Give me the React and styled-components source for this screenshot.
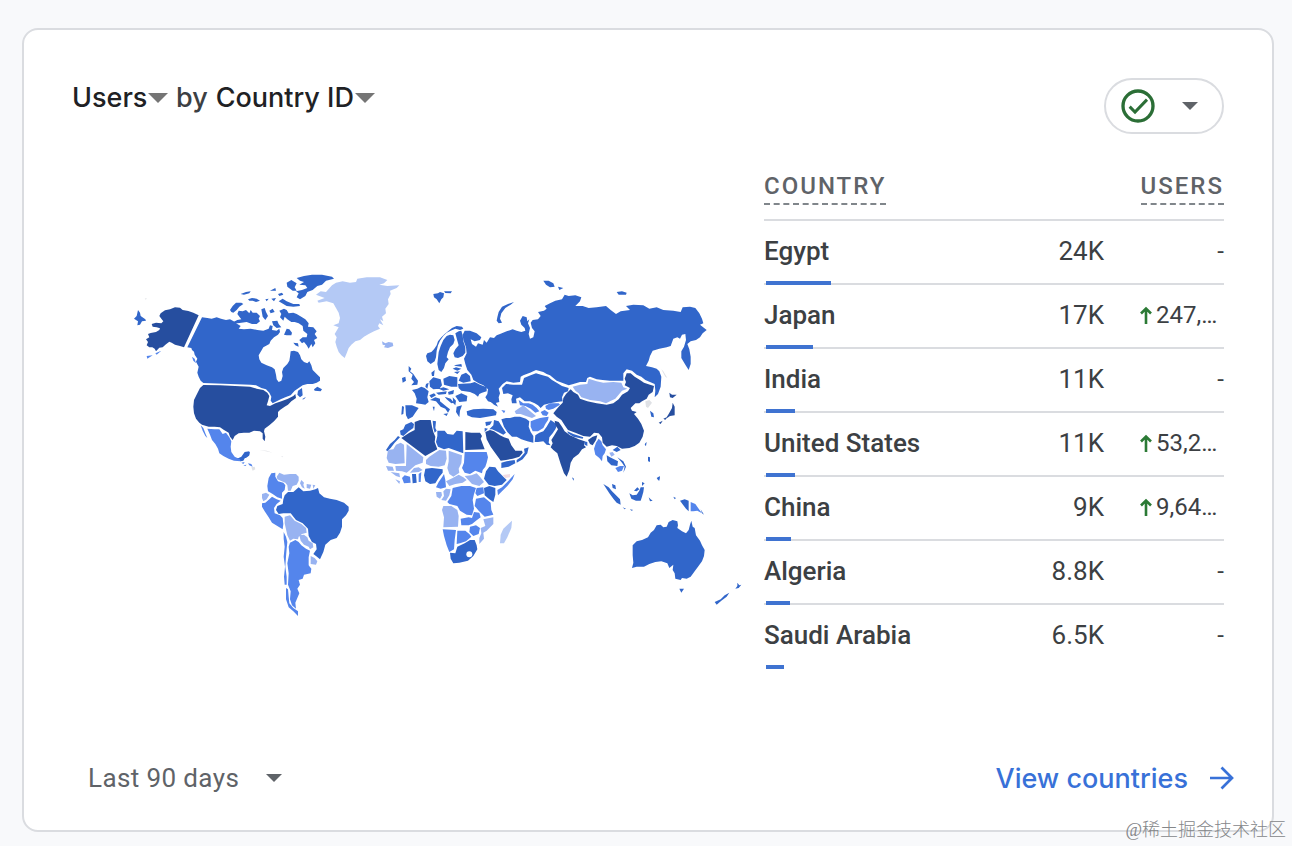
import React from 'react';
import styled, { createGlobalStyle } from 'styled-components';

const tones = {
  top: '#264e9f',
  high: '#3166ca',
  mid: '#5485ec',
  low: '#98b3f1',
  least: '#b4c9f5',
  none: '#dfe1e5',
};

const regions = [
  {
    name: 'north-america',
    origin: [0, 0],
    shapes: {
      top: [
        'M122,160 135,151 150,148 165,142 180,143 188,150 205,153 220,158 236,166 192,262 180,258 165,254 155,248 148,245 138,253 128,262 118,263 108,274 104,266 97,262 88,262 80,256 84,246 78,238 88,232 84,222 92,219 108,216 118,210 120,205 110,202 98,200 95,192 108,188 124,190 130,184 124,176 118,168Z',
        'M250,375 300,376 390,380 410,386 430,390 442,398 448,408 444,424 440,436 450,438 466,430 484,424 504,416 520,408 526,402 528,414 514,424 504,434 494,440 480,450 474,456 474,470 462,484 448,496 434,506 432,514 436,530 434,544 428,536 428,520 420,514 402,512 388,518 372,518 356,520 344,528 338,540 330,530 326,518 312,510 300,502 284,500 266,500 246,494 238,488 228,476 222,460 220,440 222,420 232,400 240,384Z',
      ],
      high: [
        'M54,150 60,158 62,168 76,178 78,182 66,184 60,194 52,196 54,184 42,176 50,168Z',
        'M246,172 262,174 275,176 290,172 303,176 318,180 330,178 345,186 352,192 362,198 356,206 372,208 392,206 412,210 430,212 446,206 450,196 458,198 456,210 470,212 478,206 480,216 474,224 462,232 452,242 448,252 430,262 424,272 416,286 418,298 424,308 440,316 456,322 464,328 468,344 470,358 476,366 484,362 488,348 486,336 490,324 502,312 508,302 510,290 512,274 522,272 534,276 540,286 544,298 552,306 562,310 568,304 574,316 578,330 590,342 600,352 600,362 590,368 578,372 562,372 548,376 536,384 524,392 512,406 496,412 482,418 470,424 458,430 452,422 454,410 448,398 438,388 424,384 408,376 392,374 250,369 242,362 236,350 232,338 236,320 228,305 232,296 224,284 222,275 216,270 214,264 202,262Z',
        'M330,150 338,138 348,128 364,128 370,132 358,140 350,150 340,158 334,156Z',
        'M356,152 368,154 378,150 388,160 392,150 398,158 410,158 420,168 416,176 420,184 410,192 396,192 380,186 364,188 352,190 340,186 352,180 364,178 358,170 352,162Z',
        'M362,102 378,96 392,94 388,100 372,104Z',
        'M384,118 396,114 410,116 420,122 408,126 398,122 388,122Z',
        'M424,148 434,144 438,156 444,168 436,180 428,170Z',
        'M436,118 446,116 440,124Z M448,152 458,146 464,156 452,160Z M454,116 468,114 462,124Z M450,92 466,84 468,92Z M474,102 486,98 490,104 478,108Z',
        'M476,124 488,116 500,124 520,132 538,132 540,138 520,140 500,138 490,132Z',
        'M500,68 514,60 530,70 524,82 530,92 518,92 502,80Z',
        'M530,54 552,48 576,44 606,44 636,50 642,56 618,62 606,74 592,78 578,90 562,96 556,108 540,118 530,112 536,100 528,94 546,90 562,84 556,76 538,74 552,66 540,62Z',
        'M478,152 492,146 500,150 506,160 520,158 530,162 540,168 556,178 566,190 564,200 580,202 590,214 584,222 592,234 582,240 586,250 578,262 574,252 566,266 560,256 552,246 546,250 538,240 548,232 560,232 562,222 550,212 548,198 536,190 524,186 514,186 502,178 494,170 490,182 480,172 484,162Z',
        'M456,184 472,182 476,192 484,202 470,204 460,196Z',
        'M492,224 500,206 508,208 516,218 514,226 500,226Z M520,248 534,250 536,260 526,256Z',
        'M582,388 592,380 606,388 602,394 584,392Z',
        'M534,392 546,384 548,406 540,412 532,404Z M546,418 558,410 552,418Z',
        'M334,594 356,594 364,590 374,576 388,574 386,588 376,592 370,602 362,604 356,602Z',
      ],
      mid: [
        'M262,506 284,508 298,508 308,522 318,518 328,532 334,544 332,560 334,576 344,590 360,598 362,604 342,602 326,596 310,588 298,580 294,566 286,552 276,540 270,524Z',
        'M242,496 250,504 256,520 262,534 256,528 248,512Z',
        'M80,288 98,286 82,296Z M106,280 124,272 110,284Z M216,290 224,296 228,310 220,302Z',
        'M364,608 374,606 370,612Z M384,610 394,612 398,620 388,616Z M370,616 380,614 376,618Z',
      ],
      none: [
        'M394,622 404,620 406,628 398,632Z M418,570 440,572 458,578 438,574Z M484,588 490,590 486,592Z M74,116 80,114 78,119Z',
      ],
    },
  },
  {
    name: 'north-atlantic',
    origin: [540, 0],
    shapes: {
      least: [
        'M48,104 62,94 78,96 96,76 108,68 128,64 150,68 168,66 172,56 200,52 240,52 262,60 252,70 238,74 262,78 298,76 290,84 270,92 272,102 264,118 266,132 256,146 258,160 246,170 250,184 240,178 250,196 238,190 234,198 240,206 222,214 206,222 192,230 180,240 166,244 154,254 146,264 140,280 134,294 124,286 116,276 110,260 106,246 110,232 104,222 116,202 100,196 116,190 120,174 116,158 108,144 100,130 80,124 56,128 52,122 74,114Z',
      ],
      low: ['M246,244 256,250 266,246 278,248 280,258 264,264 252,262 256,256 248,254Z'],
      high: [
        'M400,102 414,100 420,96 432,100 430,112 424,118 418,130 410,118 402,112Z M432,94 456,94 452,100 436,99Z',
        'M642,126 624,132 606,140 596,156 592,172 590,182 596,190 606,188 600,176 604,160 616,144 632,134Z',
        'M378,288 382,280 394,276 402,268 410,256 414,244 424,232 434,222 446,212 456,204 470,198 486,200 490,206 480,210 466,206 452,212 440,218 430,228 420,242 414,256 410,272 408,292 404,304 392,312 382,304Z',
        'M416,330 412,312 414,294 416,276 422,258 430,240 440,228 450,224 460,226 464,240 460,252 450,262 444,276 440,292 446,298 436,310 432,324 424,336Z',
        'M466,220 476,214 484,212 488,226 490,244 496,262 496,278 488,288 474,294 464,292 460,280 466,268 476,256 472,242Z',
      ],
    },
  },
  {
    name: 'europe',
    origin: [780, 180],
    shapes: {
      high: [
        'M86,138 94,146 90,154 100,162 108,174 114,182 112,194 94,196 102,186 94,176 98,164 86,154Z',
        'M66,174 76,170 78,182 68,188Z',
        'M96,210 112,206 124,200 134,204 146,214 142,232 146,246 136,254 124,252 108,250 110,236 104,220Z',
        'M76,256 96,256 116,264 106,278 98,290 84,298 78,286Z M66,258 72,260 70,282 64,284Z',
        'M148,184 160,172 182,178 186,196 178,206 160,208 150,200Z M154,158 164,150 162,168 156,168Z M138,192 146,188 142,206 136,200Z',
        'M190,176 208,168 232,172 232,200 214,200 192,194Z',
        'M176,206 190,202 208,208 190,212Z M168,218 200,214 198,222 176,224Z M148,226 162,220 168,226 154,234Z',
        'M150,240 166,232 180,236 180,244 200,260 210,268 204,278 196,266 182,260 168,244Z M158,260 164,260 162,274Z M190,282 204,280 200,288Z',
        'M204,216 222,210 220,222 206,224Z M226,228 244,220 262,228 260,244 238,246Z',
        'M236,182 244,164 258,158 270,168 272,184 250,188Z',
        'M218,146 228,142 244,146 232,152Z M222,136 244,132 246,140 228,138Z M222,156 240,154 232,162Z',
        'M234,192 272,190 284,186 300,194 320,202 320,214 306,218 298,222 294,230 284,222 270,216 244,212 236,204Z',
        'M194,230 212,236 222,248 214,250 200,238Z M218,232 228,242 226,256 220,250Z M230,260 246,256 240,272 238,292 228,276Z',
        'M322,236 346,246 354,260 342,254Z',
        'M260,274 280,268 310,266 340,268 350,276 348,286 322,290 300,294 276,292 262,286Z',
      ],
    },
  },
  {
    name: 'asia',
    origin: [1140, 0],
    shapes: {
      high: [
        'M-106,212 -90,212 -70,220 -56,232 -60,240 -76,244 -88,238 -84,252 -72,260 -66,250 -52,254 -48,240 -40,248 -30,232 -18,234 -10,226 0,222 20,214 38,208 50,212 64,216 76,212 74,204 64,194 60,182 68,168 80,172 82,184 88,178 84,190 90,204 86,222 90,236 100,232 104,214 96,204 92,188 98,180 114,178 122,168 114,156 132,152 140,146 134,138 150,130 166,122 186,118 194,104 206,108 226,106 244,112 240,124 226,138 248,138 266,144 290,142 318,138 332,150 348,162 362,154 390,150 378,138 400,134 430,136 448,146 470,142 490,150 520,152 542,156 548,142 570,140 586,144 598,160 606,176 610,190 600,194 620,210 608,220 600,232 588,240 572,244 562,252 568,268 572,290 572,312 566,330 556,314 544,294 544,274 552,260 558,240 556,222 546,224 540,236 532,232 520,236 512,258 500,262 478,266 458,272 450,288 446,302 438,318 456,322 470,326 478,334 484,350 482,380 474,402 464,412 466,392 464,372 450,366 436,360 424,350 410,344 396,332 380,328 370,340 370,362 352,362 330,362 308,360 290,358 270,350 262,354 258,366 240,366 220,372 206,376 190,370 170,362 150,346 140,342 130,336 108,330 90,338 70,346 62,350 60,366 40,368 20,364 8,372 -4,386 0,400 -4,412 -2,426 -16,430 -36,424 -44,412 -38,402 -36,388 -50,376 -64,370 -80,360 -86,344 -98,330 -104,312 -108,296 -100,280 -102,262 -110,240 -112,224Z',
        'M130,62 146,62 160,70 164,80 150,82 138,74Z M174,80 190,84 178,90Z M350,96 366,94 380,98 378,104 356,104Z',
        'M6,384 18,372 40,374 66,374 72,354 92,346 108,340 128,346 144,350 156,360 170,368 186,378 206,384 204,394 192,398 186,412 188,424 170,426 150,430 132,434 122,444 114,436 104,430 90,424 74,424 60,412 48,416 50,430 36,430 34,418 38,406 24,400 10,402Z',
        'M4,478 18,474 30,474 44,470 60,470 78,476 88,484 86,500 92,516 100,528 100,548 82,544 64,538 50,530 36,530 22,516 12,500Z',
        'M106,526 118,518 130,514 140,500 146,490 152,480 164,488 172,494 166,508 158,520 148,532 146,548 152,556 140,554 130,544 114,546 104,546Z',
        'M202,514 220,522 250,532 248,536 220,530 204,520Z M252,544 262,546 262,558 254,554Z',
        'M450,452 460,460 462,472 454,470Z M436,550 440,546 438,558Z',
        'M320,586 330,592 342,598 354,604 352,618 334,616 322,604Z M338,570 352,560 362,570 350,576Z M352,592 370,604 378,620 370,638 374,620 366,608Z',
        'M444,590 450,592 450,606 444,602Z M470,654 480,648 476,662Z M216,652 222,656 220,662Z',
      ],
      top: [
        'M164,482 176,486 186,500 194,514 210,526 236,538 254,544 252,556 258,562 246,568 236,582 220,594 212,608 208,630 200,650 192,640 182,612 172,580 160,570 152,562 158,550 154,540 164,524 174,508 166,494Z',
        'M264,540 278,530 292,526 288,540 278,556 270,552Z',
        'M166,452 178,438 188,428 190,414 198,402 212,388 220,396 234,404 240,416 262,424 290,430 320,434 340,430 356,418 366,404 384,394 390,384 374,376 378,366 374,356 380,340 392,340 404,350 420,360 432,368 450,374 462,378 458,396 446,404 440,416 426,424 418,430 406,430 392,444 396,452 410,456 402,462 414,476 424,492 432,512 428,530 418,548 404,558 388,564 366,566 350,558 336,556 320,560 308,548 306,532 296,520 282,518 270,530 250,528 226,518 204,510 194,496 184,480 170,470 160,460Z',
        'M508,398 516,404 530,404 518,414 510,412Z',
        'M518,428 524,440 524,466 510,468 496,478 506,462 516,444Z M476,488 488,482 482,492Z M490,476 500,472 496,480Z',
      ],
      mid: [
        'M56,420 70,430 86,430 98,434 110,444 118,454 106,458 92,446 76,438 60,436Z',
        'M136,438 150,430 176,430 180,434 160,446 146,450 138,446Z',
        'M92,484 108,478 120,474 134,472 146,470 144,480 136,492 130,504 114,514 98,514 92,500Z',
        'M288,548 296,536 304,544 308,556 318,568 314,580 308,588 306,604 298,594 286,584 282,566Z',
        'M346,624 360,618 372,618 366,632 354,636Z',
        'M4,450 16,452 12,460Z M122,456 134,450 146,458 140,468 128,466Z',
      ],
      low: [
        'M218,380 240,374 262,372 266,356 290,364 310,368 340,366 364,368 370,382 382,386 366,392 356,404 346,416 330,424 318,430 300,424 270,420 244,412 236,400 226,392Z',
        'M44,454 58,444 70,436 82,446 96,458 108,468 96,474 78,468 62,462 48,462Z',
        'M328,578 338,576 344,584 334,590Z',
      ],
      none: ['M436,424 448,420 456,428 444,444 438,440Z M484,328 490,334 502,354 496,350Z'],
    },
  },
  {
    name: 'oceania',
    origin: [1410, 510],
    shapes: {
      high: [
        'M40,162 56,172 66,184 78,196 90,208 92,224 80,218 70,206 58,190Z M66,162 76,166 78,178 68,174Z',
        'M118,190 128,196 140,194 148,182 152,172 162,172 160,186 156,200 152,212 138,212 124,206Z M132,182 142,172 148,178 140,184Z M156,156 164,160 156,168Z',
        'M176,202 182,208 188,212 180,214Z M98,232 108,236 104,238Z M120,238 130,240 124,242Z',
        'M176,80 180,92 176,96Z M202,146 210,140 208,152Z M250,200 258,204 254,208Z M164,44 168,38 168,48Z',
        'M270,212 284,208 296,212 296,244 288,236 280,226Z M332,238 342,254 336,250Z',
        'M128,346 140,334 156,330 174,322 182,308 192,300 200,286 212,284 220,292 230,290 236,276 248,270 262,274 264,286 262,294 276,304 288,310 296,300 300,284 304,272 308,290 314,294 318,316 330,332 336,346 344,360 342,378 336,394 324,410 314,424 302,440 290,446 276,444 272,450 256,446 254,430 248,420 250,404 238,414 232,400 214,394 196,396 178,402 162,410 140,410 126,414 130,398 128,376Z',
        'M268,476 282,476 274,488Z M374,516 392,508 404,496 418,488 410,500 394,512 380,524Z M442,458 448,466 454,464 446,474 436,476 442,468Z',
      ],
      mid: ['M302,216 316,222 326,236 336,250 322,242 310,244 302,244Z'],
    },
  },
  {
    name: 'south-america',
    origin: [360, 570],
    shapes: {
      high: [
        'M134,136 144,126 160,126 176,112 190,124 210,122 226,118 234,114 238,130 252,142 270,146 290,150 312,158 326,170 326,182 318,196 306,208 306,230 300,248 290,264 272,270 256,284 250,306 240,328 228,318 220,312 230,298 228,282 216,276 206,258 204,236 188,220 168,210 152,190 130,190 116,192 108,180 112,168 128,162 130,148Z',
        'M10,20 20,8 30,6 28,16 18,24 10,24Z',
      ],
      mid: [
        'M86,84 94,70 106,68 106,80 114,94 130,98 136,106 134,120 126,128 126,146 112,142 98,132 84,124 82,108Z',
        'M66,160 76,158 88,148 96,140 110,148 122,152 110,162 102,174 104,190 120,196 128,204 130,222 128,238 112,228 96,218 86,202 74,184 66,170Z',
        'M150,278 166,270 176,276 184,286 198,296 210,302 206,322 206,346 214,356 212,370 192,374 188,386 176,390 180,404 172,416 178,430 172,444 166,458 168,476 156,466 150,448 152,424 144,404 146,370 142,340 148,310 146,290Z',
        'M131,246 138,260 142,276 140,296 138,320 136,350 140,380 140,404 134,404 132,380 135,350 131,320 134,290 131,266Z',
        'M138,414 144,418 146,440 148,460 160,474 174,484 174,498 160,484 146,472 138,448Z',
      ],
      low: [
        'M110,80 118,68 132,74 150,72 168,72 176,80 176,92 170,104 158,108 152,122 144,122 142,106 136,98 122,92 112,88Z',
        'M184,90 192,98 190,104 194,116 186,112 180,100Z M200,102 214,104 210,116 200,114Z M218,104 226,106 220,116Z',
        'M66,132 78,128 88,134 80,148 70,154 66,144Z',
        'M134,200 150,196 164,212 184,222 198,234 200,248 186,252 176,260 174,268 160,266 150,272 142,256 138,238 134,220Z',
        'M178,256 192,254 202,262 206,272 218,280 220,292 210,298 206,290 192,284 182,272Z',
        'M212,318 224,324 232,334 228,344 212,342Z',
      ],
    },
  },
  {
    name: 'africa',
    origin: [750, 420],
    shapes: {
      high: [
        'M124,66 132,72 130,84 116,94 100,108 92,104 90,92 100,88 106,74Z M48,150 60,132 74,120 84,108 90,112 74,128 62,144 52,154Z',
        'M188,62 198,64 196,84 200,92 194,98 190,84Z',
        'M202,92 224,92 232,102 250,104 260,92 278,94 280,160 236,144 222,148 204,140 198,126 202,108Z',
        'M348,214 358,200 376,202 384,214 400,230 410,240 396,254 374,258 356,254 342,236Z',
        'M342,264 358,258 376,264 376,284 370,306 358,298 344,286Z',
        'M166,206 186,204 218,208 218,218 208,230 196,250 180,252 166,244 162,226Z',
        'M126,222 138,222 140,248 128,250Z',
        'M240,458 256,460 262,440 284,430 300,420 314,420 320,436 322,448 310,468 294,482 268,488 250,490 242,476Z',
        'M462,146 476,142 472,160 458,178 440,188 440,180 452,172 464,158Z M394,188 410,184 434,180 436,190 416,200 394,204Z',
        'M372,60 386,64 396,80 408,98 400,104 384,96 366,88 358,88 370,76Z M346,66 366,64 360,74 348,78Z M344,84 354,86 344,96Z',
      ],
      top: [
        'M134,66 150,60 182,60 186,80 190,96 196,110 194,126 202,148 166,168 94,114 118,98 134,90Z',
        'M286,96 304,98 330,98 336,108 332,116 344,148 286,150Z',
        'M346,96 360,90 372,94 390,106 402,112 416,116 424,136 436,152 456,152 458,158 448,170 428,176 408,180 392,182 388,176 376,160 362,140 350,118Z',
      ],
      mid: [
        'M284,156 350,156 354,172 350,188 346,200 338,210 336,220 316,212 300,222 284,218 276,204 282,188Z',
        'M434,222 428,238 412,258 396,274 384,286 382,270 396,262 414,244Z',
        'M96,234 104,226 120,230 122,248 102,250Z M146,222 154,216 152,246 146,246Z',
        'M206,246 216,232 222,222 226,240 228,262 212,266 198,262Z',
        'M248,264 274,258 300,258 318,264 312,282 308,300 312,326 306,346 290,344 270,332 262,318 238,312 232,306 244,288Z',
        'M320,264 340,262 342,280 322,288 316,280Z',
        'M318,296 342,292 362,308 364,330 370,344 344,350 326,332 314,318Z',
        'M272,356 296,352 306,354 312,336 328,338 332,352 318,362 306,372 296,376 274,376Z',
        'M300,380 318,376 330,384 326,402 310,408 298,396Z',
        'M218,388 258,390 254,420 252,448 238,456 230,436 222,408Z',
        'M262,392 286,392 298,402 304,410 288,424 270,430 260,432Z',
      ],
      low: [
        'M236,152 276,166 274,190 266,206 268,218 250,230 238,222 232,204 236,184Z',
        'M168,180 178,170 208,150 228,152 230,176 224,196 206,200 182,198 168,192Z',
        'M110,132 160,172 158,188 136,196 120,210 110,218 96,214 78,212 76,198 108,198Z',
        'M54,150 70,148 78,134 92,128 102,134 104,190 76,192 56,188 50,174Z',
        'M120,218 132,204 146,202 158,210 146,216Z',
        'M48,198 68,200 72,212 54,212Z M62,216 88,220 90,232 78,228Z M76,238 90,244 88,252Z',
        'M228,244 248,234 266,224 280,232 290,240 278,248 256,252 238,258Z',
        'M284,228 304,226 320,220 330,230 342,246 328,258 306,252Z',
        'M198,276 214,276 216,286 210,296 200,290Z M220,274 228,266 242,268 238,286 228,302 214,300 222,288Z',
        'M220,318 244,318 262,330 266,348 264,380 220,382 222,352 216,330Z',
        'M340,358 370,352 370,372 350,392 340,398 342,416 328,432 328,414 334,400 332,384 346,378Z',
      ],
      least: ['M426,362 424,384 412,412 402,430 390,430 392,404 400,386Z'],
    },
  },
];

const countries = [
  { name: 'Egypt', users: '24K', change: null, bar: 65 },
  { name: 'Japan', users: '17K', change: '247,…', bar: 47 },
  { name: 'India', users: '11K', change: null, bar: 29 },
  { name: 'United States', users: '11K', change: '53,2…', bar: 29 },
  { name: 'China', users: '9K', change: '9,64…', bar: 25 },
  { name: 'Algeria', users: '8.8K', change: null, bar: 24 },
  { name: 'Saudi Arabia', users: '6.5K', change: null, bar: 18 },
];

const Caret = ({ color = '#5f6368', width = 16 }) => (
  <CaretSvg width={width} height={width / 2} viewBox='0 0 16 8' aria-hidden='true'>
    <path d='M0 0h16L8 8z' fill={color} />
  </CaretSvg>
);

const CheckCircle = () => (
  <svg width='40' height='40' viewBox='0 0 24 24' fill='none' stroke='#2b6e36' strokeWidth='2' aria-hidden='true'>
    <circle cx='12' cy='12' r='9' />
    <path d='M7 12.4l3.2 3.2 7.2-7.4' strokeWidth='1.8' />
  </svg>
);

const UpArrow = () => (
  <svg width='12' height='18' viewBox='0 0 12 18' fill='none' stroke='#2b7a35' strokeWidth='2.6' aria-hidden='true'>
    <path d='M6 18V3M1 7.500l5-5 5 5' />
  </svg>
);

const RightArrow = () => (
  <svg width='24' height='24' viewBox='0 0 24 24' fill='none' stroke='currentColor' strokeWidth='2.7' aria-hidden='true'>
    <path d='M0 12h22M11.500 1.500L22 12 11.500 22.500' />
  </svg>
);

const WorldMap = () => (
  <MapSvg viewBox='0 0 1926 1110' role='img' aria-label='Users by country'>
    {regions.map(({ name, origin, shapes }) => (
      <g key={name} transform={`translate(${origin.join(' ')})`}>
        {Object.entries(shapes).map(([tone, paths]) => (
          <path key={tone} d={paths.join(' ')} fill={tones[tone]} />
        ))}
      </g>
    ))}
    {/* Lesotho, Horn of Africa */}
    <circle cx='1048' cy='883' r='9' fill='#fff' />
    <path d='M1148 645l22-3v10l-14 2z' fill='#f3dce3' />
  </MapSvg>
);

const Picker = ({ label, options, children, ...rest }) => (
  <PickerLabel {...rest}>
    <PickerSelect aria-label={label}>
      {options.map(option => (
        <option key={option}>{option}</option>
      ))}
    </PickerSelect>
    {children}
  </PickerLabel>
);

const App = () => {
  return (
    <>
      <GlobalStyle />
      <Card>
        <Header>
          <Title>
            <Picker label='Metric' options={['Users']}>
              <Caret width={20} color='#757575' />
            </Picker>
            <TitleJoin>by</TitleJoin>
            <Picker label='Dimension' options={['Country ID']}>
              <Caret width={20} color='#757575' />
            </Picker>
          </Title>
          <StatusButton type='button' aria-label='Data quality'>
            <CheckCircle />
            <Caret />
          </StatusButton>
        </Header>
        <Body>
          <WorldMap />
          <Table>
            <thead>
              <tr>
                <HeadCell scope='col'>
                  <HeadText>COUNTRY</HeadText>
                </HeadCell>
                <HeadCell scope='col' colSpan={2} $right>
                  <HeadText>USERS</HeadText>
                </HeadCell>
              </tr>
            </thead>
            <tbody>
              {countries.map(({ name, users, change, bar }) => (
                <Row key={name}>
                  <NameCell scope='row'>
                    {name}
                    <Bar style={{ width: bar }} />
                  </NameCell>
                  <UsersCell>{users}</UsersCell>
                  <ChangeCell>
                    {change ? (
                      <Change>
                        <UpArrow />
                        {change}
                      </Change>
                    ) : (
                      '-'
                    )}
                  </ChangeCell>
                </Row>
              ))}
            </tbody>
          </Table>
        </Body>
        <Footer>
          <RangePicker label='Date range' options={['Last 90 days']}>
            <Caret />
          </RangePicker>
          <ViewLink href='#countries'>
            View countries
            <RightArrow />
          </ViewLink>
        </Footer>
      </Card>
      <Watermark>@稀土掘金技术社区</Watermark>
    </>
  );
};

export default App;

const GlobalStyle = createGlobalStyle`
  * {
    box-sizing: border-box;
  }
  body {
    margin: 0;
    background: #f8f9fb;
    color: #3c4043;
    font-family: Roboto, 'Liberation Sans', sans-serif;
  }
`;

const Card = styled.main`
  display: flex;
  flex-direction: column;
  min-height: calc(100vh - 42px);
  margin: 28px 18px 14px 22px;
  border: 2px solid #dadce0;
  border-radius: 16px;
  background: #fff;
`;

const Header = styled.header`
  display: flex;
  justify-content: space-between;
  align-items: flex-start;
  padding: 48px 48px 0;
`;

const Title = styled.h1`
  display: flex;
  align-items: center;
  gap: 8px;
  margin: 0;
  color: #202124;
  font-family: Inter, sans-serif;
  font-size: 27px;
  font-weight: 500;
  line-height: 40px;
`;

const TitleJoin = styled.span`
  color: #3c4043;
`;

const PickerLabel = styled.label`
  display: inline-flex;
  align-items: center;
`;

const PickerSelect = styled.select`
  appearance: none;
  padding: 0;
  border: 0;
  background: none;
  color: inherit;
  font: inherit;
  letter-spacing: inherit;
  cursor: pointer;
`;

const CaretSvg = styled.svg`
  flex: none;
  pointer-events: none;
`;

const StatusButton = styled.button`
  display: flex;
  align-items: center;
  gap: 24px;
  height: 56px;
  padding: 0 24px 0 12px;
  border: 2px solid #dadce0;
  border-radius: 28px;
  background: #fff;
  cursor: pointer;
`;

const Body = styled.section`
  display: grid;
  grid-template-columns: minmax(0, 1fr) 460px;
  align-items: start;
  padding: 0 48px;
`;

const MapSvg = styled.svg`
  display: block;
  width: calc(100% - 50px);
  margin: 126px 0 0 48px;
`;

const Table = styled.table`
  width: 100%;
  border-spacing: 0;
  font-size: 26px;
`;

const HeadCell = styled.th`
  height: 87px;
  padding: 0 0 14px;
  border-bottom: 2px solid #dadce0;
  vertical-align: bottom;
  text-align: ${({ $right }) => ($right ? 'right' : 'left')};
`;

const HeadText = styled.span`
  display: inline-block;
  border-bottom: 2px dashed #80868b;
  color: #5f6368;
  font-size: 24px;
  font-weight: 500;
  letter-spacing: 2px;
  line-height: 34px;
`;

const Row = styled.tr`
  & > * {
    height: 64px;
    padding: 0 0 2px;
    border-bottom: 2px solid #dadce0;
  }
  &:last-child > * {
    border-color: transparent;
  }
`;

const NameCell = styled.th`
  position: relative;
  font-weight: 500;
  text-align: left;
`;

const Bar = styled.span`
  position: absolute;
  bottom: -2px;
  left: 2px;
  height: 4px;
  background: #3f73d1;
`;

const UsersCell = styled.td`
  text-align: right;
`;

const ChangeCell = styled.td`
  width: 120px;
  font-size: 24px;
  text-align: right;
`;

const Change = styled.span`
  display: flex;
  align-items: center;
  gap: 4px;
  padding-left: 36px;
`;

const Footer = styled.footer`
  display: flex;
  justify-content: space-between;
  align-items: center;
  height: 48px;
  margin-top: auto;
  margin-bottom: 28px;
  padding: 0 38px 0 64px;
`;

const RangePicker = styled(Picker)`
  gap: 26px;
  color: #5f6368;
  font-size: 26px;
  letter-spacing: 0.015em;
`;

const ViewLink = styled.a`
  display: flex;
  align-items: center;
  gap: 22px;
  color: #3871d8;
  font-family: Inter, sans-serif;
  font-size: 27px;
  font-weight: 500;
  text-decoration: none;
`;

const Watermark = styled.div`
  position: absolute;
  right: 6px;
  bottom: 4px;
  color: #85878a;
  font-family: 'Liberation Serif', 'Noto Sans CJK SC', sans-serif;
  font-size: 18px;
  font-weight: 300;
  line-height: 24px;
`;
